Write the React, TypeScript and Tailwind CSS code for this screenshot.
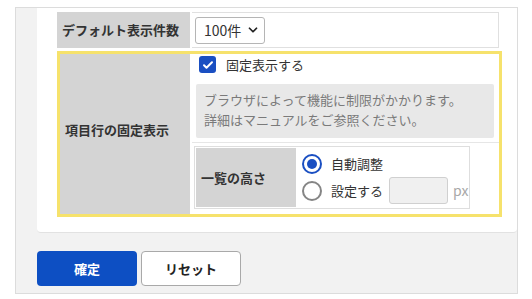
import React from "react";

const jp = "font-['Noto_Sans_CJK_JP','Noto_Sans',sans-serif]";

function HeadCell({ children, className = "" }: { children: React.ReactNode; className?: string }) {
  return (
    <div className={`flex shrink-0 items-center bg-[#d4d4d4] pl-[5px] text-[13px] font-bold text-[#333] ${className}`}>
      {children}
    </div>
  );
}

function Radio({ checked }: { checked: boolean }) {
  return checked ? (
    <span className="flex h-[20px] w-[20px] shrink-0 items-center justify-center rounded-full border-[2px] border-[#1a4fc2] bg-white">
      <span className="h-[10px] w-[10px] rounded-full bg-[#1a4fc2]" />
    </span>
  ) : (
    <span className="h-[20px] w-[20px] shrink-0 rounded-full border-[2px] border-[#858585] bg-white" />
  );
}

export default function App() {
  return (
    <div className={`h-[299px] w-[532px] overflow-hidden bg-white pl-[15px] pt-[7px] ${jp}`}>
      <div className="h-[287px] w-[503px] border border-[#dcdcdc] bg-[#f2f2f2] pl-[21px]">
        {/* 設定カード */}
        <div className="rounded-b-[4px] border-b border-[#e2e2e2] bg-white pb-[15px] pl-[20px] pr-[18px] pt-[4px]">
          {/* デフォルト表示件数 */}
          <div className="flex h-[36px]">
            <HeadCell className="w-[133px]">デフォルト表示件数</HeadCell>
            <div className="ml-[2px] flex flex-1 items-center border-y border-r border-[#e0e0e0] pl-[3px]">
              <div className="flex h-[27px] w-[70px] items-center justify-between rounded-[3px] border border-[#b5b5b5] pl-[8px] pr-[4px] text-[14px] text-[#333]">
                <span>100件</span>
                <svg width="14" height="14" viewBox="0 0 24 24" fill="none" stroke="#222" strokeWidth="3" strokeLinecap="round" strokeLinejoin="round">
                  <path d="M6 9l6 6 6-6" />
                </svg>
              </div>
            </div>
          </div>

          {/* 項目行の固定表示 */}
          <div className="mt-[3px] flex w-[445px] border-[3px] border-[#f6e26c]">
            <HeadCell className="w-[130px] pb-[8px]">項目行の固定表示</HeadCell>
            <div className="ml-[2px] flex-1 pb-[5px]">
              <div className="flex items-center pl-[7px] pt-[2px]">
                <span className="flex h-[17px] w-[17px] items-center justify-center rounded-[3px] bg-[#1a4fc2]">
                  <svg width="12" height="12" viewBox="0 0 24 24" fill="none" stroke="#fff" strokeWidth="4" strokeLinecap="round" strokeLinejoin="round">
                    <path d="M4 12.5l5 5L20 6.5" />
                  </svg>
                </span>
                <span className="ml-[10px] text-[13px] leading-[17px] text-[#333]">固定表示する</span>
              </div>
              <div className="ml-[4px] mr-[5px] mt-[11px] h-[54px] rounded-[2px] bg-[#e8e8e8] px-[8px] pt-[6px] text-[13px] leading-[20px] text-[#7a7a7a]">
                <p>ブラウザによって機能に制限がかかります。</p>
                <p>詳細はマニュアルをご参照ください。</p>
              </div>
              <div className="mt-[4px] border-t border-[#e6e6e6] pt-[3px]">
                <div className="ml-[2px] flex h-[63px] w-[276px] border border-[#dedede] p-px">
                  <HeadCell className="w-[100px]">一覧の高さ</HeadCell>
                  <div className="flex-1 whitespace-nowrap pl-[6px] pt-[4px] text-[13px] text-[#333]">
                    <div className="flex h-[24px] items-center">
                      <Radio checked />
                      <span className="ml-[9px]">自動調整</span>
                    </div>
                    <div className="flex h-[29px] items-center">
                      <Radio checked={false} />
                      <span className="ml-[9px] shrink-0">設定する</span>
                      <span className="ml-[6px] h-[27px] w-[59px] shrink-0 rounded-[3px] border border-[#d0d0d0] bg-[#f0f0f0]" />
                      <span className="ml-[5px] shrink-0 text-[14px] text-[#a8a8a8]">px</span>
                    </div>
                  </div>
                </div>
              </div>
            </div>
          </div>
        </div>

        {/* ボタン */}
        <div className="mt-[18px] flex gap-[4px]">
          <button type="button" className="h-[35px] w-[100px] rounded-[4px] bg-[#0d4fc3] text-[13px] font-bold text-white">
            確定
          </button>
          <button type="button" className="h-[35px] w-[100px] rounded-[4px] border border-[#a9a9a9] bg-white text-[13px] font-bold text-[#222]">
            リセット
          </button>
        </div>
      </div>
    </div>
  );
}
